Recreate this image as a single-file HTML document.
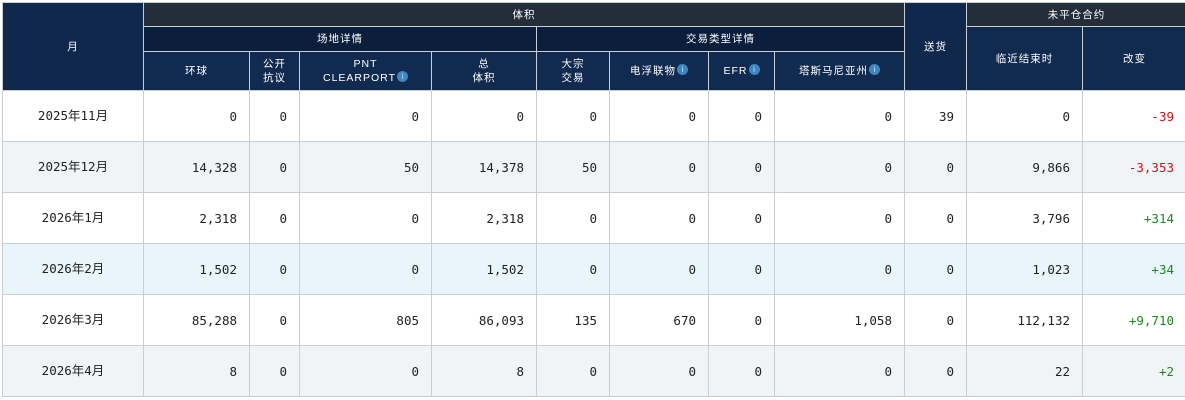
<!DOCTYPE html>
<html><head><meta charset="utf-8"><style>
html,body{margin:0;padding:0;background:#fff;width:1185px;height:400px;overflow:hidden}
table{position:absolute;left:2px;top:2px;border-collapse:collapse;table-layout:fixed;width:1184px;
font-family:"DejaVu Sans Mono","Liberation Mono","Noto Sans CJK SC",monospace;font-size:12.5px;color:#222}
td,th{border:1px solid #c9ced4;padding:0 12px;overflow:hidden;white-space:nowrap}
th{color:#fff;font-weight:normal;font-size:10.5px;font-family:"Liberation Sans","Noto Sans CJK SC",sans-serif;text-align:center;line-height:14px;letter-spacing:1px;padding:0 4px}
.h1{background:#242e3b;height:23px}
.h2{background:#0b1e3c;height:24px}
.h3{background:#112a4f;height:38px}
.mon{background:#10284b}
td{text-align:right;height:50px;line-height:15px;vertical-align:middle}
td.m{text-align:center}
td.m span{display:inline-block;line-height:15px;height:15px;position:relative;top:-1px}
tr.a td{background:#f1f4f7}
tr.b td{background:#e8f6fc}
.r{color:#d0131a}.g{color:#1a8a1a}
.i{display:inline-block;width:11px;height:11px;border-radius:50%;background:#3f86c2;vertical-align:top;margin-left:1px;font-size:8px;line-height:11px;color:#cfe3f3;letter-spacing:0}
</style></head><body>
<table>
<colgroup><col style="width:141px"><col style="width:106px"><col style="width:50px"><col style="width:132px"><col style="width:105px"><col style="width:73px"><col style="width:99px"><col style="width:66px"><col style="width:130px"><col style="width:62px"><col style="width:116px"><col style="width:104px"></colgroup>
<tr><th rowspan="3" class="mon">月</th><th colspan="8" class="h1">体积</th><th rowspan="3" class="mon">送货</th><th colspan="2" class="h1">未平仓合约</th></tr>
<tr><th colspan="4" class="h2">场地详情</th><th colspan="4" class="h2">交易类型详情</th><th rowspan="2" class="h3">临近结束时</th><th rowspan="2" class="h3">改变</th></tr>
<tr class="h3"><th class="h3">环球</th><th class="h3">公开<br>抗议</th><th class="h3">PNT<br>CLEARPORT<span class="i">i</span></th><th class="h3">总<br>体积</th><th class="h3">大宗<br>交易</th><th class="h3">电浮联物<span class="i">i</span></th><th class="h3">EFR<span class="i">i</span></th><th class="h3">塔斯马尼亚州<span class="i">i</span></th></tr>
<tr><td class="m"><span>2025年11月</span></td><td>0</td><td>0</td><td>0</td><td>0</td><td>0</td><td>0</td><td>0</td><td>0</td><td>39</td><td>0</td><td class="r">-39</td></tr>
<tr class="a"><td class="m"><span>2025年12月</span></td><td>14,328</td><td>0</td><td>50</td><td>14,378</td><td>50</td><td>0</td><td>0</td><td>0</td><td>0</td><td>9,866</td><td class="r">-3,353</td></tr>
<tr><td class="m"><span>2026年1月</span></td><td>2,318</td><td>0</td><td>0</td><td>2,318</td><td>0</td><td>0</td><td>0</td><td>0</td><td>0</td><td>3,796</td><td class="g">+314</td></tr>
<tr class="b"><td class="m"><span>2026年2月</span></td><td>1,502</td><td>0</td><td>0</td><td>1,502</td><td>0</td><td>0</td><td>0</td><td>0</td><td>0</td><td>1,023</td><td class="g">+34</td></tr>
<tr><td class="m"><span>2026年3月</span></td><td>85,288</td><td>0</td><td>805</td><td>86,093</td><td>135</td><td>670</td><td>0</td><td>1,058</td><td>0</td><td>112,132</td><td class="g">+9,710</td></tr>
<tr class="a"><td class="m"><span>2026年4月</span></td><td>8</td><td>0</td><td>0</td><td>8</td><td>0</td><td>0</td><td>0</td><td>0</td><td>0</td><td>22</td><td class="g">+2</td></tr>
</table>
</body></html>
